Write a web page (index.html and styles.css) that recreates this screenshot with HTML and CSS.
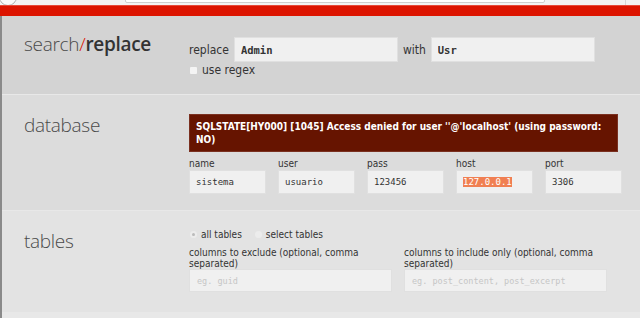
FILE: index.html
```html
<!DOCTYPE html>
<html lang="en">
<head>
  <meta charset="UTF-8" />
  <title>Search Replace DB</title>
  <link rel="stylesheet" href="styles.css">
</head>
<body>
  <div class="chrome">
    <span class="chrome-btn"></span>
    <span class="chrome-url"></span>
    <span class="chrome-right"></span>
  </div>
  <div class="redbar"></div>

  <div class="page">
    <section class="row row-search">
      <h1 class="title">search<span class="slash">/</span><strong>replace</strong></h1>
      <div class="body">
        <div class="line">
          <label class="inline-label" for="search">replace</label>
          <input type="text" id="search" class="field wide" value="Admin" />
          <label class="inline-label" for="replace">with</label>
          <input type="text" id="replace" class="field wide" value="Usr" />
        </div>
        <div class="check">
          <span class="box"></span>
          <span>use regex</span>
        </div>
      </div>
    </section>

    <section class="row row-db">
      <h2 class="title">database</h2>
      <div class="body">
        <div class="error">SQLSTATE[HY000] [1045] Access denied for user ''@'localhost' (using password: NO)</div>
        <div class="fields">
          <div class="field-group">
            <label>name</label>
            <input type="text" class="field small" value="sistema" />
          </div>
          <div class="field-group">
            <label>user</label>
            <input type="text" class="field small" value="usuario" />
          </div>
          <div class="field-group">
            <label>pass</label>
            <input type="text" class="field small" value="123456" />
          </div>
          <div class="field-group">
            <label>host</label>
            <div class="field small fake"><span class="selected">127.0.0.1</span></div>
          </div>
          <div class="field-group">
            <label>port</label>
            <input type="text" class="field small" value="3306" />
          </div>
        </div>
      </div>
    </section>

    <section class="row row-tables">
      <h2 class="title">tables</h2>
      <div class="body">
        <div class="radios">
          <span class="radio"><span class="dot on"></span>all tables</span>
          <span class="radio"><span class="dot"></span>select tables</span>
        </div>
        <div class="columns">
          <div class="col">
            <label>columns to exclude (optional, comma separated)</label>
            <input type="text" class="field col-field" placeholder="eg. guid" />
          </div>
          <div class="col">
            <label>columns to include only (optional, comma separated)</label>
            <input type="text" class="field col-field" placeholder="eg. post_content, post_excerpt" />
          </div>
        </div>
      </div>
    </section>

    <section class="row row-next"></section>
  </div>
</body>
</html>
```

FILE: styles.css
```css
* {
  box-sizing: border-box;
}

body {
  margin: 0;
  font-family: 'DejaVu Sans Condensed', 'DejaVu Sans', sans-serif;
  font-size: 11px;
  color: #333;
  background: #e6e6e6;
  overflow: hidden;
}

.chrome {
  height: 5px;
  background: #f3f3f3;
  display: flex;
  align-items: flex-end;
  overflow: hidden;
}

.chrome-btn {
  width: 18px;
  height: 18px;
  margin-left: -1px;
  margin-bottom: -1px;
  border: 1px solid #b0b0b0;
  border-radius: 50%;
  background: #fafafa;
}

.chrome-url {
  margin-left: 108px;
  width: 420px;
  height: 8px;
  margin-bottom: 2px;
  background: #fff;
  border: 1px solid #cfcfcf;
  border-radius: 2px;
}

.chrome-right {
  margin-left: 80px;
  width: 1px;
  height: 5px;
  background: #d6d6d6;
}

.redbar {
  height: 11px;
  background: #dc1400;
  border-top: 1px solid #e64a3a;
}

.page {
  border-left: 2px solid #8a8a8a;
}

.row {
  display: flex;
  padding-left: 22px;
  border-bottom: 1px solid #e8e8e8;
}

.row-search {
  background: #d3d3d3;
  height: 79px;
  padding-top: 21px;
}

.row-db {
  background: #dcdcdc;
  height: 116px;
  padding-top: 19px;
}

.row-tables {
  background: #e3e3e3;
  height: 102px;
  padding-top: 18px;
}

.row-next {
  background: #e8e8e8;
  height: 20px;
}

.title {
  width: 165px;
  flex: none;
  margin: 0;
  font-family: 'Open Sans', sans-serif;
  font-weight: 300;
  font-size: 19px;
  line-height: 24px;
  letter-spacing: -0.3px;
  color: #4a4a4a;
}

.row-search .title {
  margin-top: -5px;
}

.row-db .title {
  margin-top: -1px;
}

.row-tables .title {
  margin-top: 0;
}

.title strong {
  font-weight: 600;
  color: #333;
}

.slash {
  color: #dc1400;
}

.body {
  flex: 1;
}

.line {
  display: flex;
  align-items: center;
}

.inline-label {
  font-size: 12px;
  margin-right: 5px;
}

.inline-label + .field + .inline-label {
  margin-left: 5px;
}

.field {
  border: 1px solid #e0e0e0;
  background: #f0f0f0;
  font-family: 'DejaVu Sans Mono', monospace;
  font-size: 10.5px;
  font-weight: bold;
  color: #333;
  padding: 0 6px;
  outline: none;
}

.wide {
  width: 164px;
  height: 25px;
}

.check {
  display: flex;
  align-items: center;
  margin-top: 1px;
  font-size: 12px;
}

.box {
  width: 7px;
  height: 7px;
  background: #f4f4f4;
  border-radius: 1px;
  margin: 0 5px 0 1px;
}

.error {
  width: 429px;
  min-height: 35px;
  background: #661400;
  border: 1px solid #7a3020;
  color: #fff;
  font-weight: bold;
  font-size: 10px;
  line-height: 13px;
  padding: 5px 6px;
}

.fields {
  display: flex;
  gap: 12px;
  margin-top: 7px;
}

.field-group label,
.col label {
  display: block;
  font-size: 10px;
  line-height: 11px;
  color: #333;
}

.field-group label {
  line-height: 10px;
  margin-bottom: 1px;
}

.small {
  width: 77px;
  height: 24px;
  font-weight: normal;
  font-size: 9px;
  padding: 0 6px;
}

.fake {
  display: flex;
  align-items: center;
}

.selected {
  background: #f07f52;
  color: #fff;
}

.radios {
  display: flex;
  gap: 12px;
  font-size: 10px;
}

.radio {
  display: flex;
  align-items: center;
}

.dot {
  width: 7px;
  height: 7px;
  border-radius: 50%;
  background: #ececec;
  margin: 0 4px 0 1px;
  display: flex;
  align-items: center;
  justify-content: center;
}

.dot.on::after {
  content: "";
  width: 3px;
  height: 3px;
  border-radius: 50%;
  background: #bbb;
}

.columns {
  display: flex;
  gap: 12px;
  margin-top: 7px;
}

.col {
  width: 203px;
}

.col-field {
  width: 203px;
  height: 23px;
  font-weight: normal;
  font-size: 8.5px;
  line-height: normal;
  padding: 0 7px;
  color: #999;
}

.col-field::placeholder {
  color: #c6c6c6;
}
```
